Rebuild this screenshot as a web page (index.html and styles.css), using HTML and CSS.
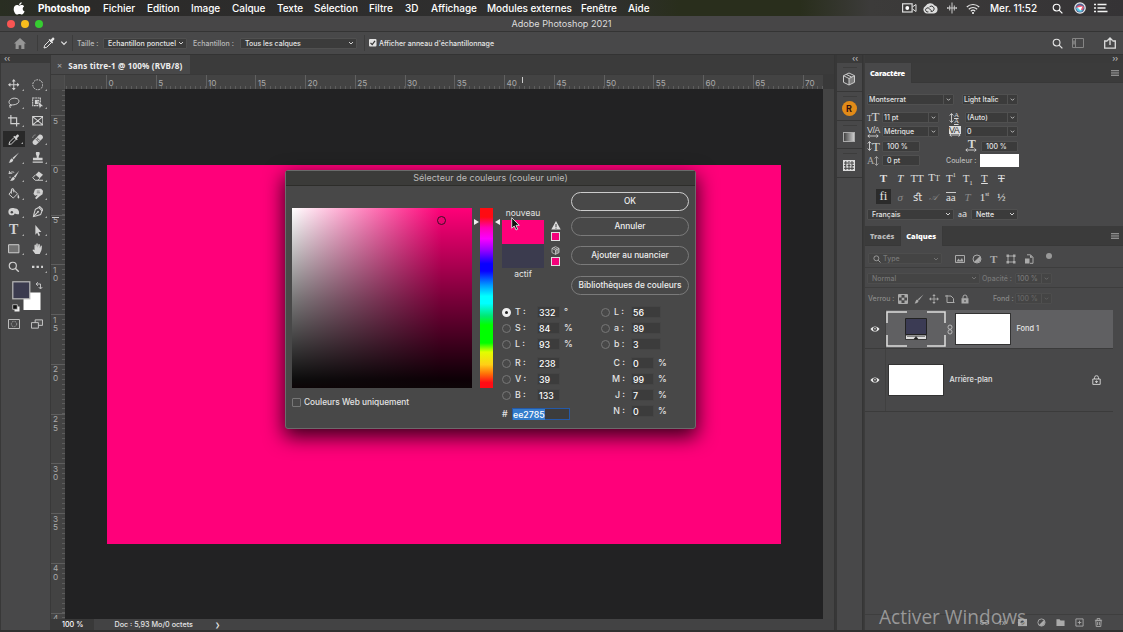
FILE: index.html
```html
<!DOCTYPE html>
<html lang="fr">
<head>
<meta charset="utf-8">
<title>Adobe Photoshop 2021</title>
<link rel="stylesheet" href="styles.css">
</head>
<body>
<svg class="defs" aria-hidden="true">
  <symbol id="chev" viewBox="0 0 6 6"><path d="M1 2l2 2 2-2" fill="none" stroke="currentColor" stroke-width=".9"/></symbol>
  <symbol id="search" viewBox="0 0 12 12"><circle cx="5" cy="5" r="3.7" fill="none" stroke="currentColor" stroke-width="1.2"/><path d="M7.8 7.8L11.3 11.3" stroke="currentColor" stroke-width="1.4"/></symbol>
  <symbol id="menu" viewBox="0 0 8 6"><path d="M0 .5h8M0 2.2h8M0 3.9h8M0 5.5h8" stroke="currentColor" stroke-width=".9"/></symbol>
  <symbol id="dropper" viewBox="0 0 12 12"><path d="M1 11l.7-2.7L6.5 3.500 8.500 5.500 3.700 10.300z" fill="none" stroke="currentColor"/><path d="M5.600 2.700l1-.8 1 .8 1.700-1.800c1-1 2.800.7 1.800 1.800L9.300 4.500l.8 1-.9.9z" fill="currentColor"/></symbol>
  <symbol id="brush" viewBox="0 0 12 12"><path d="M11.500.5L6 7.500 4.600 6.200zM4 6.700l1.600 1.500C5.200 10.500 3 11.500.5 11.200 2.300 10.300 1.500 7.500 4 6.700z" fill="currentColor"/></symbol>
  <symbol id="move" viewBox="0 0 12 12"><path d="M6 1.500v9M1.500 6h9" stroke="currentColor"/><path d="M6 0l2 2.500H4zM6 12l2-2.500H4zM0 6l2.500-2v4zM12 6L9.500 4v4z" fill="currentColor"/></symbol>
  <symbol id="eye" viewBox="0 0 10 8"><path d="M.5 4C2.500.6 7.500.6 9.500 4 7.500 7.400 2.500 7.400.5 4z" fill="#eee"/><circle cx="5" cy="4" r="2.100" fill="#444"/><circle cx="5" cy="3.700" r=".8" fill="#ddd"/></symbol>
  <symbol id="lock" viewBox="0 0 8 10"><path d="M2 4.500V3a2 2 0 0 1 4 0v1.500" fill="none" stroke="currentColor"/><path d="M.5 4.200h7v5.300h-7z" fill="currentColor"/><path d="M4 6v2" stroke="#444"/></symbol>
  <symbol id="adjust" viewBox="0 0 10 10"><circle cx="5" cy="5" r="4" fill="none" stroke="currentColor"/><path d="M2.200 7.800A4 4 0 0 0 7.800 2.200z" fill="currentColor"/></symbol>
  <symbol id="cube" viewBox="0 0 14 14"><path d="M7 1l5.500 2.700v6.600L7 13 1.500 10.300V3.700zM1.500 3.700L7 6.500l5.500-2.800M7 6.500V13M4.200 2.400l5.500 2.700" fill="none" stroke="currentColor"/><path d="M7 6.500l5.500-2.800v6.600L7 13z" fill="currentColor" opacity=".4"/></symbol>
  <symbol id="updown" viewBox="0 0 5 12"><path d="M2.500 2v8M.7 3.500l1.800-2 1.800 2M.7 8.500l1.800 2 1.800-2" fill="none" stroke="currentColor" stroke-width=".9"/></symbol>
  <symbol id="leftright" viewBox="0 0 12 4"><path d="M1 2h10M2.500.5L.8 2l1.700 1.500M9.500.5L11.200 2 9.500 3.500" fill="none" stroke="currentColor" stroke-width=".9"/></symbol>
</svg>

<header class="menubar">
  <svg class="apple" viewBox="0 0 12 13"><path d="M8.700.2c.1 1.500-1.200 2.800-2.600 2.800C5.900 1.600 7.300.3 8.700.2zM6.300 3.700c.6 0 1.300-.6 2.400-.6 1 0 1.900.5 2.400 1.300-2.100 1.300-1.700 4 .5 4.900C11 11 10 12.600 8.800 12.600c-.9 0-1.200-.5-2.300-.5s-1.400.5-2.300.5C2.600 12.600.7 9.800.7 7.200c0-2.700 1.700-4.100 3.300-4.100 1 0 1.800.6 2.300.6z" fill="#fff"/></svg>
  <b>Photoshop</b><span>Fichier</span><span>Edition</span><span>Image</span><span>Calque</span><span>Texte</span><span>Sélection</span><span>Filtre</span><span>3D</span><span>Affichage</span><span>Modules externes</span><span>Fenêtre</span><span>Aide</span>
  <svg width="15" height="10" viewBox="0 0 15 10"><rect x=".6" y=".8" width="9.500" height="8.200" fill="none" stroke="#ddd" stroke-width="1.200"/><circle cx="5.300" cy="5" r="1.900" fill="#fff"/><path d="M10.500 3.800L14 1.500v7L10.500 6" fill="none" stroke="#ddd"/></svg>
  <svg width="15" height="11" viewBox="0 0 15 11"><path d="M4 10.500A4 4 0 0 1 2.500 3 5.500 5.500 0 0 1 11.600 2.500 4.100 4.100 0 0 1 11 10.500z" fill="#ddd"/><path d="M8.500 7.900L6.400 5.700a2.100 2.100 0 1 0-1 3.200M6.500 3.900a2.700 2.700 0 1 1 1.200 4.500" fill="none" stroke="#333" stroke-width="1"/></svg>
  <svg width="10" height="12" viewBox="0 0 10 12"><path d="M5 .5v11M2.700 3.500v5M7.300 3.500v5M.7 5v2M9.300 5v2M1 6h8" stroke="#ccc" stroke-width="1"/></svg>
  <svg width="14" height="11" viewBox="0 0 14 11"><path d="M.8 4a9 9 0 0 1 12.400 0M2.800 6.200a6 6 0 0 1 8.400 0M4.800 8.200a3.300 3.300 0 0 1 4.400 0" fill="none" stroke="#e6e6e6" stroke-width="1.200"/><circle cx="7" cy="9.900" r="1" fill="#fff"/></svg>
  <span>Mer. 11:52</span>
  <svg width="11" height="11"><use href="#search"/></svg>
  <svg width="12" height="12" viewBox="0 0 12 12"><circle cx="6" cy="6" r="5.800" fill="#eee"/><circle cx="6" cy="6" r="4.600" fill="#536493"/><path d="M2 6c2-4 5-3 8-1-1 4-5 6-8 1z" fill="#ed5770"/><path d="M2 6c3-2 5 2 7 3-4 2-6 0-7-3z" fill="#56cce8"/><path d="M3.500 5.500l5-1-2 4z" fill="#fff"/></svg>
  <svg width="14" height="10" viewBox="0 0 14 10"><path d="M3.500 1.500h9M3.500 5h8M3.500 8.500h10M0 1.500h2M0 5h2M0 8.500h2" stroke="#f2f2f2" stroke-width="1.500"/></svg>
</header>

<div class="titlebar">
  <div class="lights"><i></i><i></i><i></i></div>
  <span>Adobe Photoshop 2021</span>
</div>

<div class="options">
  <svg width="12" height="11" viewBox="0 0 12 11"><path d="M6 0l6 5.500h-1.600V11H7.300V7.300H4.700V11H1.600V5.500H0z" fill="#969696"/></svg>
  <div class="vsep"></div>
  <svg class="lite" width="12" height="12"><use href="#dropper"/></svg>
  <svg width="8" height="8"><use href="#chev"/></svg>
  <div class="vsep"></div>
  <span class="dim">Taille :</span>
  <div class="select point"><span>Echantillon ponctuel</span><svg><use href="#chev"/></svg></div>
  <span class="dim">Echantillon :</span>
  <div class="select"><span>Tous les calques</span><svg><use href="#chev"/></svg></div>
  <div class="vsep"></div>
  <svg width="8" height="8" viewBox="0 0 8 8"><rect width="7.500" height="7.500" rx="1" fill="#e2e2e2"/><path d="M1.500 3.800l1.700 1.800L6 1.800" fill="none" stroke="#333" stroke-width="1.200"/></svg>
  <span>Afficher anneau d'échantillonnage</span>
  <svg width="11" height="11"><use href="#search"/></svg>
  <svg width="12" height="10" viewBox="0 0 12 10"><path d="M.5.5h11v9H.5zM3.500.5v9" fill="none" stroke="#858585"/><path d="M1 2.500h2v4H1z" fill="#777"/></svg>
  <svg width="12" height="12" viewBox="0 0 12 12"><path d="M3.500 4H.7v7.200h10.600V4H8.500M6 8V1.500M3.500 3.500L6 1l2.500 2.500" fill="none" stroke="#ddd" stroke-width="1.300"/></svg>
</div>

<main class="workspace">
  <aside class="toolbar">
    <div class="collapse">‹‹</div>
    <div class="tools">
      <i><svg><use href="#move"/></svg></i>
      <i><svg viewBox="0 0 12 12"><circle cx="6" cy="6" r="5.200" fill="none" stroke="currentColor" stroke-dasharray="1.800 1"/></svg></i>
      <i><svg viewBox="0 0 12 12"><path d="M2.500 8C-1 5 2.500 1.200 6.500 1.200c6 0 6.500 5 1.500 6.500-2.500.8-4.500.5-5.500.3-1 .7.500 2 1 1.200.5-1.200-2.500-1.400-1.700.7l.7 1.500" fill="none" stroke="currentColor"/></svg></i>
      <i><svg viewBox="0 0 12 12"><path d="M.7 1h8v8h-8z" fill="none" stroke="currentColor" stroke-width="1.100" stroke-dasharray="2 .6"/><path d="M3 3h4.500v4.500H3z" fill="currentColor"/><path d="M6 4.200l6 5.500-2.500.2L8 12.200z" fill="currentColor" stroke="#484849" stroke-width=".5"/></svg></i>
      <i><svg viewBox="0 0 12 12"><path d="M3 0v9h9M0 3h9v9" fill="none" stroke="currentColor" stroke-width="1.200"/></svg></i>
      <i class="plain"><svg viewBox="0 0 12 12"><path d="M.7 1.500h10.600v9H.7zM1 2l10 8M11 2L1 10" fill="none" stroke="currentColor" stroke-width="1.100"/></svg></i>
      <i class="on"><svg><use href="#dropper"/></svg></i>
      <i><svg viewBox="0 0 12 12"><path d="M1 7.200l6.200-6.200c2-1.700 5.500 1.500 3.800 3.800L4.800 11c-2 1.700-5.500-1.500-3.800-3.800z" fill="currentColor"/><path d="M3.700 5l3.300 3.300M5 3.700L8.300 7M5.500 6h1" stroke="#484849" stroke-width=".8" fill="none"/><path d="M3.500 1A3 3 0 0 0 .8 4" fill="none" stroke="currentColor" stroke-width=".8" stroke-dasharray="1 .6"/></svg></i>
      <i><svg><use href="#brush"/></svg></i>
      <i><svg viewBox="0 0 12 12"><path d="M4 1.500a2 2 0 0 1 4 0C8 3 7 3.500 7 6h4v2.500H1V6h4C5 3.500 4 3 4 1.500zM.7 10h10.600v1.300H.7z" fill="currentColor"/></svg></i>
      <i><svg viewBox="0 0 12 12"><path d="M11.700.7L7.700 8 6 6.700zM5.500 7l1.700 1.500c-.5 2.300-2.800 3-5.300 2.700C3.600 10.300 3.500 8 5.500 7z" fill="currentColor"/><path d="M.5 3.500h4M6.500 2.500A3.500 3.500 0 0 0 1.500 4V1M1.500 7.500h1.300" fill="none" stroke="currentColor" stroke-width=".9"/></svg></i>
      <i><svg viewBox="0 0 12 12"><path d="M7 1.500L11.500 5 8 8.700 3.700 5z" fill="currentColor"/><path d="M3.700 5L.8 8l2.500 2.700h2.900L8 8.700M6 10.700h5.500" fill="none" stroke="currentColor"/></svg></i>
      <i><svg viewBox="0 0 12 12"><path d="M5 1.500L10 6l-4.500 4.500L1 6.500zM3.500 6V2c0-2 2.500-2 2.500 0v2.500" fill="none" stroke="currentColor"/><path d="M10.500 6.500c1.800 2.500 1.500 4.500.5 4.500s-1.500-1.500-.5-4.500z" fill="currentColor"/></svg></i>
      <i><svg viewBox="0 0 12 12"><path d="M1.500 6l1.500-4.500L5 .8h4.500l2 2.200-.5 3.500L8 8.500l-3.500 3.200-1.300-1.200L6 7 3.200 8z" fill="currentColor"/><path d="M5 3.200h3M5 5h3.500" stroke="#484849" stroke-width=".6"/></svg></i>
      <i><svg viewBox="0 0 12 12"><path d="M.5 7C0 3.200 3 1.800 6.500 2.300c4 0 5.700 3.200 4.900 6.200-2 .7-3-.7-4.400-.7-.7 2.700-6 2.700-6.500-.8z" fill="currentColor"/><circle cx="4" cy="6.500" r="1.300" fill="#484849"/></svg></i>
      <i><svg viewBox="0 0 12 12"><path d="M7 1.500L10.500 5 9 9l-5 1.500-2.500.5.500-2.500L3.500 3.500zM1.500 11l4.500-4.500M7 1.500l1-1L11.500 4l-1 1" fill="none" stroke="currentColor" stroke-width="1.100"/><circle cx="6.300" cy="6" r="1" fill="currentColor"/></svg></i>
      <i class="t">T</i>
      <i><svg viewBox="0 0 12 12"><path d="M3.500 0l6.300 7.200-3 .2 1.600 3.400-1.500.7-1.500-3.400-1.900 2z" fill="currentColor"/></svg></i>
      <i><svg viewBox="0 0 12 12"><path d="M.6 1.800h10.800v8.400H.6z" fill="#727272" stroke="currentColor"/></svg></i>
      <i><svg viewBox="0 0 12 12"><path d="M3.500 11.500L.6 7.500c0-1 1-1 2 0V2.300c.3-.9 1.200-.9 1.500 0V5l.4-4c.3-.9 1.300-.9 1.500 0v4l.7-3.500c.4-.8 1.300-.6 1.500.2v3.700l.8-2.300c.5-.7 1.300-.4 1.300.4 0 4-.7 5-2.300 8z" fill="currentColor"/></svg></i>
      <i class="plain"><svg><use href="#search"/></svg></i>
      <i><svg viewBox="0 0 12 12"><path d="M0 5h2.500v2.200H0zM4.700 5h2.500v2.200H4.700zM9.500 5H12v2.200H9.500z" fill="currentColor"/></svg></i>
    </div>
    <svg class="colors" viewBox="0 0 36 34"><path d="M24.500 4h4v4.500M26 2.200L24 4l2 1.800M26.700 7l1.800 2 1.800-2" fill="none" stroke="#ccc" stroke-width=".9"/><rect x="11.500" y="12.500" width="17" height="17.500" fill="#fff"/><rect x=".8" y="1.800" width="17" height="17" fill="#3b3b4f" stroke="#bbb" stroke-width="1.200"/><path d="M2.500 26.500h5v5h-5z" fill="#eee"/><path d="M.7 24.700h4.600v4.600H.7z" fill="#111" stroke="#ccc" stroke-width=".8"/></svg>
    <div class="modes">
      <svg viewBox="0 0 12 10"><path d="M.5.500h11v9H.5z" fill="none" stroke="#bbb"/><circle cx="6" cy="5" r="2.700" fill="none" stroke="#aaa" stroke-dasharray="1 .7"/></svg>
      <svg viewBox="0 0 13 10"><path d="M4.500.5h8v6h-8z" fill="#555" stroke="#ccc"/><path d="M.5 3.500h7.500v6H.5z" fill="#484849" stroke="#ccc"/></svg>
    </div>
  </aside>

  <section class="document">
    <div class="tabs"><div class="tab"><em>×</em><b>Sans titre-1 @ 100% (RVB/8)</b></div></div>
    <div class="hruler"><div class="corner"></div><div class="marks"><span>0</span><span>5</span><span>10</span><span>15</span><span>20</span><span>25</span><span>30</span><span>35</span><span>40</span><span>45</span><span>50</span><span>55</span><span>60</span><span>65</span><span>70</span></div><i class="pointer"></i></div>
    <div class="stage">
      <div class="vruler"><span>5</span><span>0</span><span>5</span><span>1<br>0</span><span>1<br>5</span><span>2<br>0</span><span>2<br>5</span><span>3<br>0</span><span>3<br>5</span><span>4<br>0</span><span>4</span><i class="pointer"></i></div>
      <div class="canvas"><div class="artboard"></div></div>
      <div class="scroll"></div>
    </div>
    <div class="status"><span>100 %</span><p>Doc : 5,93 Mo/0 octets</p><em>❯</em></div>
  </section>

  <aside class="dock">
    <div class="collapse">‹‹</div>
    <div class="dockitem"><svg width="14" height="14"><use href="#cube"/></svg></div>
    <div class="dockitem"><b class="badge">R</b></div>
    <div class="dockitem"><div class="gradient"></div></div>
    <div class="dockitem"><svg width="12" height="11" viewBox="0 0 12 11"><path d="M0 0h12v11H0z" fill="#ddd"/><path d="M1 3h4.500M7 3h4M1 5.600h2M4.500 5.600h3M9 5.600h2M1 8.300h10M2.800 1v9M6 1v9M9 1v9" stroke="#444" stroke-width="1"/></svg></div>
  </aside>

  <aside class="panels">
    <div class="collapse">››</div>
    <div class="paneltabs"><b class="active narrow">Caractère</b><svg class="burger"><use href="#menu"/></svg></div>
    <div class="character">
      <div class="crow r1"><div class="select split"><span>Montserrat</span><svg><use href="#chev"/></svg></div><div class="select split"><span>Light Italic</span><svg><use href="#chev"/></svg></div></div>
      <div class="crow r2"><span class="g"><small>T</small>T</span><div class="select split"><span>11 pt</span><svg><use href="#chev"/></svg></div><span class="g lead"><svg><use href="#updown"/></svg><span>A<br>A</span></span><div class="select split"><span>(Auto)</span><svg><use href="#chev"/></svg></div></div>
      <div class="crow r2"><span class="g sans">V/A<svg><use href="#leftright"/></svg></span><div class="select split"><span>Métrique</span><svg><use href="#chev"/></svg></div><span class="g sans"><mark>VA</mark><svg><use href="#leftright"/></svg></span><div class="select split"><span>0</span><svg><use href="#chev"/></svg></div></div>
      <div class="crow r4"><span class="g lead"><svg><use href="#updown"/></svg><b>T</b></span><div class="select"><span>100 %</span></div><span class="g sans wide"><b>T</b><svg><use href="#leftright"/></svg></span><div class="select"><span>100 %</span></div></div>
      <div class="crow r5"><span class="g lead dim"><b>A</b><svg><use href="#updown"/></svg></span><div class="select"><span>0 pt</span></div><span class="dim">Couleur :</span><div class="swatch"></div></div>
      <div class="styles first"><b>T</b><i class="it">T</i><span>TT</span><span>T<small>T</small></span><span>T<sup>1</sup></span><span>T<sub>1</sub></span><u>T</u><s>T</s></div>
      <div class="styles"><span class="on">fi</span><i class="off">σ</i><span>ﬆ</span><i class="off script">𝒜</i><span class="over">aa</span><i class="off">T</i><span>1<sup>st</sup></span><span>½</span></div>
      <div class="crow r8"><div class="select"><span>Français</span><svg><use href="#chev"/></svg></div><span class="aa">a<b>a</b></span><div class="select"><span>Nette</span><svg><use href="#chev"/></svg></div></div>
    </div>

    <div class="paneltabs layerstabs"><b>Tracés</b><b class="active">Calques</b><svg class="burger"><use href="#menu"/></svg></div>
    <div class="filter">
      <div class="select"><svg class="mag"><use href="#search"/></svg><span>Type</span><svg><use href="#chev"/></svg></div>
      <svg viewBox="0 0 10 10"><path d="M.5 1.500h9v7h-9z" fill="none" stroke="currentColor"/><path d="M1.500 7.500l2-3 1.500 2 2-2.500 1.500 3.500z" fill="currentColor"/></svg>
      <svg><use href="#adjust"/></svg>
      <b class="serif">T</b>
      <svg viewBox="0 0 10 10"><path d="M2 2h6v6H2z" fill="none" stroke="currentColor"/><path d="M.5.5h2.500v2.500H.5zM7 .5h2.500v2.500H7zM.5 7h2.500v2.500H.5zM7 7h2.500v2.500H7z" fill="currentColor"/></svg>
      <svg viewBox="0 0 10 10"><path d="M3 .8h3.500l2.500 2.500v6H6" fill="none" stroke="currentColor"/><path d="M1 4.500h4.500v5H1zM6 .8v3h3z" fill="currentColor"/></svg>
      <i class="toggle"></i>
    </div>
    <div class="blend"><div class="select"><span>Normal</span><svg><use href="#chev"/></svg></div><span>Opacité :</span><div class="select split"><span>100 %</span><svg><use href="#chev"/></svg></div></div>
    <div class="locks"><span>Verrou :</span>
      <svg viewBox="0 0 10 10"><path d="M.5.5h9v9h-9z" fill="none" stroke="currentColor"/><path d="M1 1h2.500v2.500H1zM6.500 1H9v2.500H6.500zM3.700 3.700h2.600v2.600H3.700zM1 6.500h2.500V9H1zM6.500 6.500H9V9H6.500z" fill="currentColor"/></svg>
      <svg><use href="#brush"/></svg><svg><use href="#move"/></svg>
      <svg viewBox="0 0 10 10"><path d="M2 1v7.500h7.500M0 2h6l2.500 2.500V8" fill="none" stroke="currentColor"/></svg>
      <svg><use href="#lock"/></svg>
      <span>Fond :</span><div class="select split"><span>100 %</span><svg><use href="#chev"/></svg></div></div>
    <div class="layers">
      <div class="layer selected"><div class="see"><svg><use href="#eye"/></svg></div>
        <div class="fill"><svg viewBox="0 0 60 36"><path d="M1 12V1h20M41 1h18v11M59 24v11H41M21 35H1V24" fill="none" stroke="#ddd" stroke-width="1.500"/><path d="M19.500 7.500h21v16h-21z" fill="#3b3b54" stroke="#222"/><path d="M19.500 24h21v4.500h-21z" fill="#ddd" stroke="#222" stroke-width=".8"/><path d="M21 25.500h18M28 28l2-2.500 2 2.500z" fill="#222" stroke="#222" stroke-width=".5"/></svg></div>
        <svg class="chain" viewBox="0 0 6 10"><rect x="1" y=".5" width="4" height="4.300" rx="2" fill="none" stroke="#bbb"/><rect x="1" y="5.200" width="4" height="4.300" rx="2" fill="none" stroke="#bbb"/></svg>
        <div class="thumb"></div><span>Fond 1</span></div>
      <div class="layer back"><div class="see"><svg><use href="#eye"/></svg></div><div class="thumb"></div><span>Arrière-plan</span>
        <svg class="padlock" viewBox="0 0 9 10"><path d="M2.500 4V2.700a2 2 0 0 1 4 0V4M.8 4h7.400v5.400H.8zM3 6.700h3M4.500 5.500v2.500" fill="none" stroke="#ccc"/></svg></div>
    </div>
    <div class="foot">
      <svg viewBox="0 0 10 10"><path d="M4 3H2a2 2 0 0 0 0 4h2M6 3h2a2 2 0 0 1 0 4H6M3 5h4" fill="none" stroke="currentColor"/></svg>
      <i>fx</i>
      <svg viewBox="0 0 10 10"><path d="M0 1h10v8H0z" fill="currentColor"/><circle cx="5" cy="5" r="2.300" fill="#484849"/></svg>
      <svg><use href="#adjust"/></svg>
      <svg viewBox="0 0 10 10"><path d="M.5 1.500h3.500l1 1.300h4.500V9h-9z" fill="currentColor"/></svg>
      <svg viewBox="0 0 10 10"><path d="M1 1h8v8H1zM5 3v4M3 5h4" fill="none" stroke="currentColor"/></svg>
      <svg viewBox="0 0 10 10"><path d="M2 3h6l-.5 6.500h-5zM1 2.500h8M3.500 2.500v-2h3v2M4 4.500v3.500M6 4.500v3.500" fill="none" stroke="currentColor"/></svg>
    </div>
  </aside>
</main>

<div class="dialog">
  <div class="dtitle">Sélecteur de couleurs (couleur unie)</div>
  <div class="dbody">
    <div class="picker">
      <div class="field"><i class="ring"></i></div>
      <label><i class="box"></i>Couleurs Web uniquement</label>
    </div>
    <div class="hue"><i class="larr"></i><div class="bar"></div><i class="rarr"></i></div>
    <div class="right">
      <div class="top">
        <div class="compare"><span>nouveau</span><div class="new"></div><div class="old"></div><span>actif</span></div>
        <div class="warn">
          <svg width="10" height="9" viewBox="0 0 10 9"><path d="M5 0l4.700 8.500H.3z" fill="#ddd"/><path d="M5 3v3M5 6.700v1" stroke="#444"/></svg><i></i>
          <svg width="9" height="9"><use href="#cube"/></svg><i></i></div>
        <div class="buttons"><button class="ok">OK</button><button>Annuler</button><button>Ajouter au nuancier</button><button>Bibliothèques de couleurs</button></div>
      </div>
      <div class="values">
        <div class="vals">
          <div><i class="radio checked"></i><span>T :</span><b>332</b><em>°</em></div>
          <div><i class="radio"></i><span>S :</span><b>84</b><em>%</em></div>
          <div><i class="radio"></i><span>L :</span><b>93</b><em>%</em></div>
          <div class="gap"><i class="radio"></i><span>R :</span><b>238</b></div>
          <div><i class="radio"></i><span>V :</span><b>39</b></div>
          <div><i class="radio"></i><span>B :</span><b>133</b></div>
          <div class="hex"><span>#</span><b><mark>ee2785</mark></b></div>
        </div>
        <div class="vals second">
          <div><i class="radio"></i><span>L :</span><b>56</b></div>
          <div><i class="radio"></i><span>a :</span><b>89</b></div>
          <div><i class="radio"></i><span>b :</span><b>3</b></div>
          <div class="gap ink"><span>C :</span><b>0</b><em>%</em></div>
          <div class="ink"><span>M :</span><b>99</b><em>%</em></div>
          <div class="ink"><span>J :</span><b>7</b><em>%</em></div>
          <div class="ink"><span>N :</span><b>0</b><em>%</em></div>
        </div>
      </div>
    </div>
  </div>
</div>
<svg class="cursor" viewBox="0 0 9 14"><path d="M.7.7v10.500l2.500-2.200 1.800 4 1.700-.8L5 8.300h3.300z" fill="#111" stroke="#ddd" stroke-width=".9"/></svg>
<div class="watermark">Activer Windows</div>
</body>
</html>
```

FILE: styles.css
```css
* { box-sizing: border-box; }
html, body { margin: 0; width: 1123px; height: 632px; overflow: hidden; }
body { display: flex; flex-direction: column; background: #484849; color: #e4e4e4; font: 500 7px/1 Inter, "Liberation Sans", sans-serif; white-space: nowrap; }
svg { display: block; flex: none; }
i, em { font-style: normal; }
.defs { position: absolute; width: 0; height: 0; }

.menubar { flex: none; height: 16px; display: grid; align-items: center; padding-left: 13px;
  grid-template-columns: 25px 65px 44px 44px 41px 45px 37px 55px 36px 26px 56px 94px 47px 274px 21px 24px 19px 24px 62px 22px 20px auto;
  background: linear-gradient(90deg, #292e22 0, #2b2a29 90px, #303030 600px, #292e1c 680px, #292e1c 800px, #3c3b3a 870px, #353335 1123px);
  font-size: 10px; color: #fff; letter-spacing: -.05px; }
.menubar b { font-weight: 700; }
.apple { width: 12px; height: 13px; }

.titlebar { flex: none; height: 16px; display: grid; grid-template-columns: 1fr auto 1fr; align-items: center; background: #474647; border-bottom: 1px solid #343434; font-size: 9.100px; font-weight: 400; color: #ddd; }
.lights { display: flex; gap: 6px; padding-left: 7px; }
.lights i { width: 8px; height: 8px; border-radius: 50%; background: #fa5553; }
.lights i:nth-child(2) { background: #f8bd1d; }
.lights i:nth-child(3) { background: #36cd31; }

.options { flex: none; height: 22px; display: grid; align-items: center; padding-left: 14px; background: #484849;
  grid-template-columns: 23px 6px 17px 12px 5px 26px 90px 47px 124px 5px 10px 673px 20px 32px auto; }
.options .select { width: 117px; }
.options .point { width: 84px; }
.vsep { width: 1px; height: 16px; background: #3c3c3c; }
.dim { color: #b9b9b9; }
.select { display: flex; align-items: center; justify-content: space-between; height: 11px; padding: 0 2px 0 4px; background: #3b3b3b; border: 1px solid #505050; border-radius: 1px; }
.select svg { width: 6px; height: 6px; }
.split { padding: 0; }
.split span { padding-left: 1px; }
.split svg { width: 10px; height: 9px; padding: 1px 2px; border-left: 1px solid #505050; }

.workspace { flex: 1; min-height: 0; display: flex; border-top: 1px solid #333; border-bottom: 2px solid #303030; background: #393939; }
.collapse { height: 8px; background: #3a3a3a; color: #bbb; font-size: 8px; line-height: 6px; padding-left: 3px; flex: none; letter-spacing: -.3px; }
.toolbar { width: 50px; flex: none; background: #484849; border-left: 1px solid #383838; }
.tools { display: grid; grid-template-columns: 23.500px 23.500px; grid-auto-rows: 18.200px; padding: 12.700px 0 0 1px; color: #d2d2d2; }
.tools i { display: flex; align-items: center; justify-content: center; position: relative; }
.tools svg { width: 11.500px; height: 11.500px; }
.tools i::after { content: ""; position: absolute; right: 2px; bottom: 3px; border: 1px solid #aaa; border-left-color: transparent; border-top-color: transparent; }
.tools .plain::after { display: none; }
.tools .on { background: #292929; margin: 1px; }
.tools .t { font: 700 14px "Liberation Serif", serif; }
.colors { width: 36px; height: 34px; margin: 4px 0 0 11px; }
.modes { display: flex; align-items: center; gap: 11px; margin: 5.500px 0 0 7px; }
.modes svg { width: 12px; height: 10px; }

.document { width: 784px; flex: none; display: flex; flex-direction: column; margin-left: 1px; border-right: 1px solid #353535; }
.tabs { height: 19px; flex: none; background: #3b3b3b; }
.tab { width: 139px; height: 20px; display: flex; align-items: center; gap: 6px; padding-left: 6px; background: #484849; font: 8.100px "Noto Sans", sans-serif; }
.tab em { font-size: 9px; color: #aaa; }
.tab b { color: #eee; letter-spacing: .16px; }
.hruler { height: 15px; flex: none; display: flex; width: 772px; background: #434343; border-top: 1px solid #393939; position: relative; }
.corner { width: 14px; flex: none; border-right: 1px solid #505050; background: #494949; }
.marks { flex: 1; min-width: 0; display: flex; padding-left: 41px; overflow: hidden; background: repeating-linear-gradient(90deg, #5d5d5d 0 1px, transparent 1px 4.976px) 1px 100% / 100% 3px no-repeat; }
.marks span { flex: 0 0 49.760px; height: 13px; padding: 4px 0 0 1.500px; border-left: 1px solid #606060; font-size: 8.200px; font-weight: 400; color: #aaa; }
.hruler .pointer { position: absolute; left: 471px; top: 2px; width: 1px; height: 6px; background: #ccc; }
.stage { flex: 1; display: flex; min-height: 0; }
.vruler { width: 14px; flex: none; position: relative; padding-top: 26px; overflow: hidden; background: repeating-linear-gradient(180deg, #5d5d5d 0 1px, transparent 1px 4.976px) 100% 1px / 3px 100% no-repeat #434343; }
.vruler span { display: block; height: 49.760px; padding: .5px 0 0 2px; border-top: 1px solid #5e5e5e; font-size: 8.200px; font-weight: 400; line-height: 8.500px; color: #aaa; }
.vruler .pointer { position: absolute; left: 1px; top: 128px; width: 7px; height: 1px; background: #ccc; }
.canvas { width: 758px; background: #222223; padding: 76px 0 0 42px; }
.artboard { width: 674px; height: 379px; background: #ff007a; }
.scroll { flex: 1; background: #444; }
.status { height: 11px; flex: none; display: flex; align-items: center; background: #434344; font-size: 7.200px; }
.status span { width: 43px; padding-left: 11px; height: 11px; line-height: 12px; background: #393939; color: #fff; }
.status p { width: 121px; margin: 0; padding: 1px 0 0 20.500px; }
.status em { font-size: 6px; }

.dock { width: 28px; flex: none; background: #484849; border-left: 2px solid #373737; border-right: 1px solid #353535; }
.dock .collapse { padding-left: 15px; }
.dockitem { height: 28.800px; display: flex; align-items: center; justify-content: center; border-bottom: 1px solid #373737; padding: 5px 1px 0 0; color: #ccc; background: linear-gradient(#3d3d3d, #3d3d3d) 50% 4px / 14px 1px no-repeat; }
.badge { width: 15px; height: 15px; border-radius: 50%; background: #e28b18; color: #311; display: grid; place-items: center; font-size: 9px; }
.gradient { width: 12px; height: 10px; border: 1px solid #aaa; background: linear-gradient(90deg, #444, #ccc); }

.panels { flex: 1; min-width: 0; display: flex; flex-direction: column; background: #484849; margin-left: 1px; border-left: 1px solid #3c3c3c; }
.panels .collapse { text-align: right; padding-right: 5px; }
.paneltabs { display: flex; align-items: center; height: 20px; flex: none; background: #3b3b3b; border-bottom: 1px solid #383838; font: 700 7.400px "Noto Sans", sans-serif; color: #b8b8b8; }
.paneltabs b { height: 20px; line-height: 20px; padding: 0 6px 0 5px; border-right: 1px solid #393939; }
.paneltabs .active { background: #484849; color: #fff; }
.paneltabs .narrow { letter-spacing: -.25px; }
.burger { width: 8px; height: 6px; margin: 0 4px 0 auto; color: #999; }

.character { height: 143px; flex: none; padding: 11px 0 0 2px; }
.crow { display: grid; align-items: center; height: 14.500px; }
.r1 { grid-template-columns: 87px 56px; gap: 8px; height: 11px; margin-bottom: 5px; }
.r2 { grid-template-columns: 15px 57px 10px 16px 53px; }
.r2 > :nth-child(3) { grid-column: 4; }
.r4 { grid-template-columns: 15px 38px 45px 16px 37px; }
.r4 > :nth-child(3) { grid-column: 4; }
.r5 { grid-template-columns: 15px 38px 25px 35px 39px; }
.r5 > :nth-child(3) { grid-column: 4; padding-left: 1px; }
.r8 { grid-template-columns: 87px 17px 47px; height: 12px; margin-top: 2px; }
.swatch { height: 13px; background: #fff; }
.g { font: 400 13px/13px "Liberation Serif", serif; color: #d6d6d6; letter-spacing: -.5px; }
.g small { font-size: 8px; }
.g.sans { font: 400 9px/9px "Liberation Sans", sans-serif; letter-spacing: -.6px; width: 13px; }
.g.sans svg { width: 12px; height: 4px; margin-top: -1px; }
.g.wide b { display: block; text-align: center; font: 700 12px/9px "Liberation Serif", serif; }
.g.lead { display: flex; align-items: center; }
.g.lead svg { width: 5px; height: 12px; }
.g.lead span { font-size: 7px; line-height: 6px; text-decoration: underline; }
.g.lead b { font-weight: 400; }
.g.dim, .g.dim b { font-size: 10px; color: #aaa; }
.g mark { background: #ddd; color: #333; display: block; width: 12px; line-height: 8px; }
.styles { display: grid; grid-template-columns: repeat(8, 16.850px); height: 19px; align-items: center; justify-items: center; padding-left: 8px; font: 11px/14px "Liberation Serif", serif; color: #e0e0e0; }
.styles.first { margin-top: 0; height: 19px; }
.styles small { font-size: 8px; }
.styles sup, .styles sub { font-size: 6px; line-height: 0; }
.styles .it { font-style: italic; }
.styles .on { width: 15px; height: 15px; background: #2b2b2b; text-align: center; font-size: 13px; }
.styles .off { color: #8a8a8a; font-style: italic; }
.styles .script { font-size: 9px; }
.over { border-top: 1px solid #ccc; line-height: 8px; }
.aa { font: 7px/8px "Noto Sans", sans-serif; text-align: center; }
.aa b { font-weight: 400; font-size: 9px; }

.filter, .blend, .locks { flex: none; display: grid; align-items: center; padding-left: 3px; border-bottom: 1px solid #3d3d3d; }
.filter { height: 22px; padding-top: 4px; grid-template-columns: 87px repeat(3, 17px) 17.500px 22px auto; color: #aaa; }
.filter > svg, .locks > svg { width: 10px; height: 10px; }
.filter .select { width: 74px; }
.filter .select span { flex: 1; padding-left: 2px; }
.filter .select, .blend, .locks { color: #777; }
.filter .select, .blend .select, .locks .select { background: #444; border-color: #4d4d4d; }
.filter .mag { width: 8px; height: 8px; color: #aaa; }
.serif { font: 700 11px "Liberation Serif", serif; padding-left: 1px; }
.toggle { width: 6px; height: 6px; border-radius: 50%; background: #999; margin-bottom: 5px; }
.blend { height: 20px; padding: 1px 0 0 2px; grid-template-columns: 115px 33px 37px; }
.blend .select:first-child { width: 113px; }
.locks { height: 22px; border-bottom-color: #484849; grid-template-columns: 30px 16px 15px 16px 15px 33px 22px 37px; color: #888; }
.locks > svg { color: #aaa; }
.locks .select { color: #666; }

.layers { flex: 1; width: 248px; }
.layer { display: flex; align-items: center; border-bottom: 1px solid #3b3b3b; font-size: 7.400px; }
.see { width: 21px; align-self: stretch; display: grid; place-items: center; border-right: 1px solid #404040; background: #484849; }
.see svg { width: 10px; height: 8px; }
.selected { height: 39px; background: #606062; }
.fill svg { width: 60px; height: 36px; }
.chain { width: 6px; height: 11px; margin: 0 2.500px 0 .5px; }
.thumb { width: 56px; height: 32px; background: #fff; border: 1px solid #333; margin-right: 5.500px; }
.back { height: 63px; }
.back .thumb { margin-left: 2px; }
.padlock { width: 9px; height: 10px; margin: 0 12px 0 auto; }
.foot { height: 16px; flex: none; display: grid; grid-template-columns: repeat(7, 19px); align-items: center; padding-left: 115px; border-top: 1px solid #3e3e3e; color: #aaa; }
.foot svg { width: 9px; height: 9px; }

.dialog { position: absolute; left: 285px; top: 170px; width: 411px; height: 259px; display: flex; flex-direction: column; background: #484848; border: 1px solid #6b6b6b; border-radius: 3px; box-shadow: 0 7px 20px 1px rgba(0,0,0,.78); font-size: 9px; }
.dtitle { height: 15px; flex: none; background: #3b3b39; border-bottom: 1px solid #2d2d2a; text-align: center; font-size: 9px; line-height: 14px; font-weight: 400; color: #bbb; }
.dbody { flex: 1; display: flex; padding-left: 6px; }
.picker { width: 181px; flex: none; padding-top: 22px; }
.field { width: 180px; height: 180px; position: relative; background: linear-gradient(180deg, transparent, rgba(0,0,0,.52) 50%, rgba(0,0,0,.95) 95%, #0d0507), linear-gradient(90deg, #fff, #ff0078 83%); }
.ring { position: absolute; left: 145px; top: 8px; width: 9px; height: 9px; border: 1px solid #3b1025; border-radius: 50%; }
.picker label { display: flex; align-items: center; gap: 3px; margin-top: 10px; font-size: 8.300px; }
.box { width: 9px; height: 9px; border: 1px solid #777; border-radius: 1px; }
.hue { width: 29px; flex: none; padding-top: 22px; display: flex; }
.bar { width: 13px; flex: none; height: 180px; background: linear-gradient(#ff0b12 0 5%, #ff00b5 11%, #fa00ff 17%, #a000ff 23%, #0900ff 31% 35%, #009dff 43%, #00ffff 49% 53%, #00e873 60%, #00ff00 65% 75%, #e1ff00 80%, #ffcf17 87%, #ff7208 92%, #ff0c15 97%); }
.larr, .rarr { margin: 11px 1px 0; height: 0; border: 3px solid transparent; border-left: 5px solid #eee; border-right: 0; }
.rarr { border-right: 5px solid #eee; border-left: 0; margin-left: 2px; }
.right { flex: none; width: 199px; }
.top { display: flex; height: 115px; }
.compare { width: 42px; margin-top: 23px; text-align: center; font-size: 8.500px; line-height: 9px; font-weight: 400; }
.new { height: 24px; margin-top: 2px; background: #ff007a; }
.old { height: 24px; margin-bottom: 2px; background: #3b3b4e; }
.warn { width: 27px; padding: 35px 0 0 6px; display: flex; flex-direction: column; }
.warn i { width: 9px; height: 9px; border: 1px solid #ddd; background: #f3007a; margin: 2px 0 5px 1px; }
.warn svg { margin-left: 1px; }
.buttons { display: flex; flex-direction: column; gap: 10.500px; padding-top: 6px; width: 118px; }
.buttons button { flex: none; height: 19px; padding: 0; background: none; color: #eee; border: 1px solid #7a7a7a; border-radius: 10px; font: 500 8.300px/1 Inter, "Liberation Sans", sans-serif; }
.buttons .ok { border-color: #ccc; margin-bottom: -5px; }
.values { display: flex; }
.vals { width: 99px; padding-top: 3px; font-size: 8.800px; }
.vals div { height: 16px; display: flex; align-items: center; }
.vals .gap { margin-top: 3px; }
.radio { width: 9px; height: 9px; border: 1px solid #777; border-radius: 50%; margin-right: 4px; }
.checked { border: 3px solid #eee; background: #222; }
.vals span { width: 22px; }
.vals b { width: 23px; height: 12px; line-height: 11px; padding-left: 1px; background: #3c3c3c; border: 1px solid #454545; font-weight: 500; color: #fff; }
.vals em { margin-left: 4px; }
.vals .hex { height: 22px; }
.vals .hex span { width: 10px; }
.vals .hex b { width: 58px; border-color: #2459a8; padding-left: 0; }
.hex mark { background: #347dcc; color: #fff; }
.vals.second span { width: 17px; }
.vals.second b { width: 30px; }
.second .ink { padding-left: 10px; }
.vals.second .ink span { width: 15px; text-align: right; padding-right: 1px; margin-right: 5px; }
.vals.second .ink b { width: 23px; }
.cursor { position: absolute; left: 511px; top: 217px; width: 9px; height: 14px; }
.watermark { position: absolute; left: 879px; top: 605px; font: 400 19.100px/25px "Open Sans", sans-serif; color: rgba(180,180,180,.75); }
```
